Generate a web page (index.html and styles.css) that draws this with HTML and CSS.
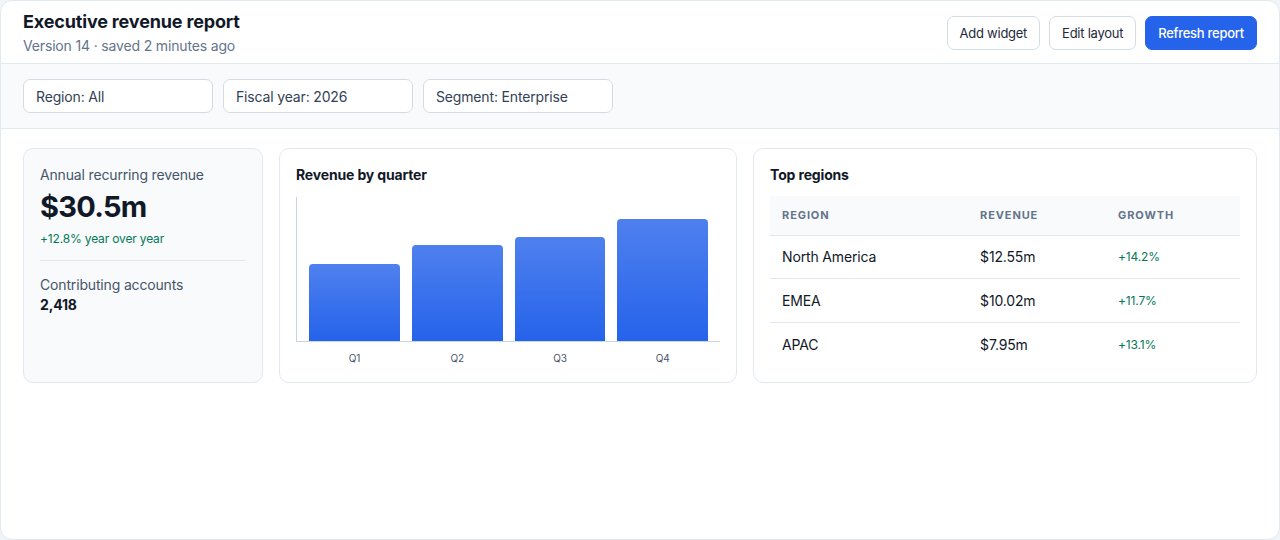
FILE: index.html
```html
<html>

<head>
    <link rel="stylesheet" href="styles.css">
</head>

<body>
    <div class="report">
        <div class="report-header">
            <div class="title-block">
                <h1>Executive revenue report</h1>
                <div class="subtitle">Version 14 · saved 2 minutes ago</div>
            </div>
            <div class="actions">
                <button class="btn">Add widget</button>
                <button class="btn">Edit layout</button>
                <button class="btn btn-primary">Refresh report</button>
            </div>
        </div>

        <div class="filters">
            <div class="filter">Region: All</div>
            <div class="filter">Fiscal year: 2026</div>
            <div class="filter">Segment: Enterprise</div>
        </div>

        <div class="widgets">
            <div class="card card-muted">
                <div class="metric-label">Annual recurring revenue</div>
                <div class="metric-value">$30.5m</div>
                <div class="metric-change">+12.8% year over year</div>
                <div class="divider"></div>
                <div class="metric-label">Contributing accounts</div>
                <div class="metric-small">2,418</div>
            </div>

            <div class="card">
                <div class="card-title">Revenue by quarter</div>
                <div class="chart">
                    <div class="bar-slot"><div class="bar" style="height: 77px"></div></div>
                    <div class="bar-slot"><div class="bar" style="height: 96px"></div></div>
                    <div class="bar-slot"><div class="bar" style="height: 104px"></div></div>
                    <div class="bar-slot"><div class="bar" style="height: 122px"></div></div>
                </div>
                <div class="chart-labels">
                    <span>Q1</span>
                    <span>Q2</span>
                    <span>Q3</span>
                    <span>Q4</span>
                </div>
            </div>

            <div class="card">
                <div class="card-title">Top regions</div>
                <table class="regions">
                    <thead>
                        <tr>
                            <th class="col-region">Region</th>
                            <th class="col-revenue">Revenue</th>
                            <th>Growth</th>
                        </tr>
                    </thead>
                    <tbody>
                        <tr>
                            <td>North America</td>
                            <td>$12.55m</td>
                            <td class="growth">+14.2%</td>
                        </tr>
                        <tr>
                            <td>EMEA</td>
                            <td>$10.02m</td>
                            <td class="growth">+11.7%</td>
                        </tr>
                        <tr>
                            <td>APAC</td>
                            <td>$7.95m</td>
                            <td class="growth">+13.1%</td>
                        </tr>
                    </tbody>
                </table>
            </div>
        </div>
    </div>
</body>

</html>
```

FILE: styles.css
```css
body {
    font-family: Inter, "Noto Sans", sans-serif;
    margin: 0;
    padding: 0;
    background-color: #f1f5f9;
    color: #0f172a;
    letter-spacing: -0.01em;
}

.report {
    height: 540px;
    box-sizing: border-box;
    background-color: #fff;
    border: 1px solid #e2e8f0;
    border-radius: 12px;
    overflow: hidden;
}

.report-header {
    display: flex;
    justify-content: space-between;
    align-items: center;
    padding: 10px 22px 7px 22px;
    border-bottom: 1px solid #e2e8f0;
}

h1 {
    margin: 0;
    font-size: 18px;
    line-height: 22px;
    font-weight: 700;
    color: #111827;
}

.subtitle {
    margin-top: 3px;
    font-size: 14px;
    line-height: 20px;
    color: #64748b;
}

.actions {
    display: flex;
    gap: 9px;
    margin-top: -1px;
}

.btn {
    font-family: inherit;
    height: 34px;
    padding: 0 12px;
    font-size: 13px;
    letter-spacing: -0.02em;
    color: #1e293b;
    background-color: #fff;
    border: 1px solid #d5dbe3;
    border-radius: 7px;
    cursor: pointer;
}

.btn-primary {
    background-color: #2563eb;
    border-color: #2563eb;
    color: #fff;
    font-weight: 500;
}

.filters {
    display: flex;
    gap: 10px;
    padding: 15px 22px;
    background-color: #f8fafc;
    border-bottom: 1px solid #e2e8f0;
}

.filter {
    width: 190px;
    height: 34px;
    box-sizing: border-box;
    padding: 0 12px;
    display: flex;
    align-items: center;
    font-size: 14px;
    color: #334155;
    background-color: #fff;
    border: 1px solid #d5dbe3;
    border-radius: 7px;
}

.widgets {
    display: grid;
    grid-template-columns: 240px 1fr 1.1fr;
    gap: 16px;
    padding: 19px 22px;
}

.card {
    border: 1px solid #e2e8f0;
    border-radius: 10px;
    padding: 16px;
    background-color: #fff;
}

.card-muted {
    background-color: #f8fafc;
}

.metric-label {
    font-size: 14px;
    line-height: 20px;
    color: #475569;
}

.metric-value {
    font-size: 29px;
    line-height: 36px;
    font-weight: 700;
    color: #111827;
    letter-spacing: -0.025em;
    margin-top: 4px;
}

.metric-change {
    font-size: 12px;
    line-height: 16px;
    color: #047857;
    margin-top: 6px;
}

.divider {
    height: 1px;
    background-color: #e2e8f0;
    margin: 13px 0 14px 0;
}

.metric-small {
    font-size: 14px;
    line-height: 20px;
    font-weight: 700;
    color: #111827;
}

.card-title {
    font-size: 14px;
    line-height: 20px;
    font-weight: 700;
    color: #111827;
}

.chart {
    display: flex;
    gap: 12px;
    height: 144px;
    margin-top: 12px;
    padding: 0 12px;
    border-left: 1px solid #cbd5e1;
    border-bottom: 1px solid #cbd5e1;
}

.bar-slot {
    flex: 1;
    display: flex;
    align-items: flex-end;
}

.bar {
    width: 100%;
    border-radius: 4px 4px 0 0;
    background: linear-gradient(#4f80ee, #2563eb);
}

.chart-labels {
    display: flex;
    gap: 12px;
    padding: 0 12px 0 13px;
    margin-top: 9px;
}

.chart-labels span {
    flex: 1;
    text-align: center;
    font-size: 10px;
    line-height: 14px;
    color: #475569;
}

.regions {
    width: 100%;
    border-collapse: collapse;
    margin-top: 11px;
}

.regions th {
    text-align: left;
    background-color: #f8fafc;
    font-size: 11px;
    font-weight: 700;
    letter-spacing: 0.08em;
    text-transform: uppercase;
    color: #64748b;
    padding: 0 12px;
    height: 39px;
    border-bottom: 1px solid #e2e8f0;
}

.col-region {
    width: 174px;
}

.col-revenue {
    width: 114px;
}

.regions td {
    font-size: 14px;
    color: #111827;
    padding: 0 12px;
    height: 43.5px;
    border-bottom: 1px solid #e2e8f0;
}

.regions tr:last-child td {
    border-bottom: none;
}

.regions td.growth {
    font-size: 12px;
    color: #047857;
}
```
